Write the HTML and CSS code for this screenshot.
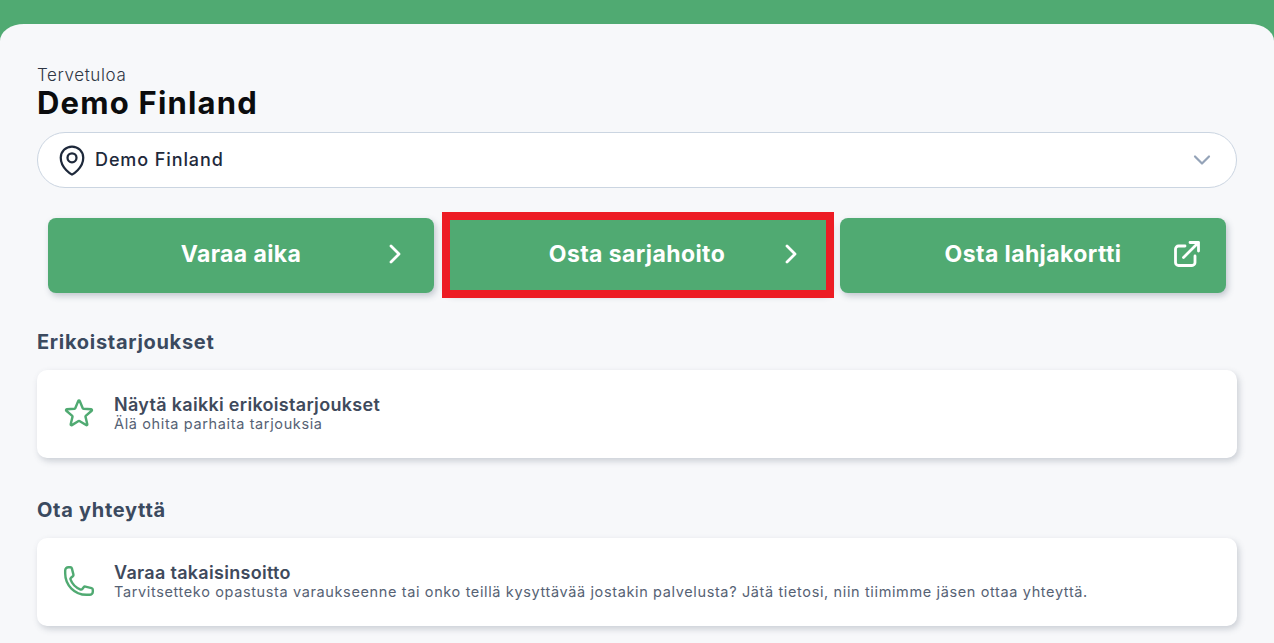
FILE: index.html
```html
<!DOCTYPE html>
<html lang="fi">
<head>
    <meta charset="UTF-8">
    <meta name="viewport" content="width=device-width, initial-scale=1.0">
    <title>Demo Finland</title>
    <link rel="stylesheet" href="styles.css">
</head>
<body>
    <main class="sheet">
        <p class="welcome">Tervetuloa</p>
        <h1 class="client-name">Demo Finland</h1>

        <div class="location-select">
            <svg class="pin-icon" viewBox="0 0 24 24" fill="none" stroke="currentColor" stroke-width="1.5" stroke-linecap="round" stroke-linejoin="round">
                <path d="M15 10.5a3 3 0 11-6 0 3 3 0 016 0z"/>
                <path d="M19.5 10.5c0 7.142-7.5 11.25-7.5 11.25S4.5 17.642 4.5 10.5a7.5 7.5 0 1115 0z"/>
            </svg>
            <span class="location-name">Demo Finland</span>
            <svg class="chevron-down" viewBox="0 0 18 12" fill="none" stroke="currentColor" stroke-width="2.2" stroke-linecap="round" stroke-linejoin="round">
                <path d="M2 2.5 9 9.5 16 2.5"/>
            </svg>
        </div>

        <div class="actions">
            <a class="action-btn">
                <span class="action-label">Varaa aika</span>
                <svg class="chevron-right" viewBox="0 0 12 20" fill="none" stroke="currentColor" stroke-width="2.800" stroke-linecap="round" stroke-linejoin="round">
                    <path d="M2 2 10 10 2 18"/>
                </svg>
            </a>
            <a class="action-btn">
                <span class="action-label">Osta sarjahoito</span>
                <svg class="chevron-right" viewBox="0 0 12 20" fill="none" stroke="currentColor" stroke-width="2.800" stroke-linecap="round" stroke-linejoin="round">
                    <path d="M2 2 10 10 2 18"/>
                </svg>
                <span class="highlight"></span>
            </a>
            <a class="action-btn">
                <span class="action-label">Osta lahjakortti</span>
                <svg class="external-icon" viewBox="0 0 26 26" fill="none" stroke="currentColor" stroke-width="2.800" stroke-linecap="round" stroke-linejoin="round">
                    <path d="M11 5H4.500A3 3 0 0 0 1.500 8V21.500A3 3 0 0 0 4.500 24.500H18A3 3 0 0 0 21 21.500V15"/>
                    <path d="M9.500 16.500 24.500 1.500M16 1.500H24.500V10"/>
                </svg>
            </a>
        </div>

        <h2 class="section-title">Erikoistarjoukset</h2>
        <div class="card">
            <svg class="card-icon" viewBox="0 0 24 24" fill="none" stroke="currentColor" stroke-width="1.7" stroke-linecap="round" stroke-linejoin="round">
                <path d="M11.48 3.499a.562.562 0 011.04 0l2.125 5.111a.563.563 0 00.475.345l5.518.442c.499.04.701.663.321.988l-4.204 3.602a.563.563 0 00-.182.557l1.285 5.385a.562.562 0 01-.84.61l-4.725-2.885a.562.562 0 00-.586 0L6.982 20.54a.562.562 0 01-.84-.61l1.285-5.386a.562.562 0 00-.182-.557l-4.204-3.602a.563.563 0 01.321-.988l5.518-.442a.563.563 0 00.475-.345L11.48 3.5z"/>
            </svg>
            <div class="card-text">
                <div class="card-title">Näytä kaikki erikoistarjoukset</div>
                <div class="card-sub">Älä ohita parhaita tarjouksia</div>
            </div>
        </div>

        <h2 class="section-title contact-title">Ota yhteyttä</h2>
        <div class="card">
            <svg class="card-icon" viewBox="0 0 24 24" fill="none" stroke="currentColor" stroke-width="1.7" stroke-linecap="round" stroke-linejoin="round">
                <path d="M2.25 6.75c0 8.284 6.716 15 15 15h2.25a2.25 2.25 0 002.25-2.25v-1.372c0-.516-.351-.966-.852-1.091l-4.423-1.106c-.44-.11-.902.055-1.173.417l-.97 1.293c-.282.376-.769.542-1.21.38a12.035 12.035 0 01-7.143-7.143c-.162-.441.004-.928.38-1.21l1.293-.97c.363-.271.527-.734.417-1.173L6.963 3.102a1.125 1.125 0 00-1.091-.852H4.5A2.25 2.25 0 002.25 4.5v2.25z"/>
            </svg>
            <div class="card-text">
                <div class="card-title">Varaa takaisinsoitto</div>
                <div class="card-sub">Tarvitsetteko opastusta varaukseenne tai onko teillä kysyttävää jostakin palvelusta? Jätä tietosi, niin tiimimme jäsen ottaa yhteyttä.</div>
            </div>
        </div>
    </main>
</body>
</html>
```

FILE: styles.css
```css
html, body {
    height: 100%;
}
body {
    margin: 0;
    padding-top: 24px;
    box-sizing: border-box;
    background-color: #50aa72;
    font-family: Inter, "Liberation Sans", sans-serif;
    overflow: hidden;
}
.sheet {
    height: 100%;
    box-sizing: border-box;
    padding: 40px 37px 0;
    background-color: #f7f8fa;
    border-radius: 24px 24px 0 0 / 17px 17px 0 0;
}
.welcome {
    margin: 0;
    font-size: 17px;
    line-height: 22px;
    font-weight: 300;
    letter-spacing: 0.6px;
    color: #2f3644;
}
.client-name {
    margin: 0 0 13px;
    font-size: 31px;
    line-height: 33px;
    font-weight: 700;
    letter-spacing: 1.2px;
    color: #0b0c0e;
}
.location-select {
    display: flex;
    align-items: center;
    height: 56px;
    box-sizing: border-box;
    padding: 0 25px 0 16px;
    background-color: #fff;
    border: 1px solid #cbd5e1;
    border-radius: 28px;
    color: #1e293b;
}
.pin-icon {
    width: 36px;
    height: 36px;
    margin-right: 5px;
}
.location-name {
    flex: 1;
    padding-bottom: 2px;
    font-size: 18px;
    font-weight: 500;
    letter-spacing: 0.9px;
}
.chevron-down {
    width: 18px;
    height: 12px;
    color: #94a3b8;
}
.actions {
    display: grid;
    grid-template-columns: repeat(3, 1fr);
    gap: 10px;
    margin: 30px 11px 0;
}
.action-btn {
    position: relative;
    display: grid;
    grid-template-columns: 1fr auto 1fr;
    align-items: center;
    height: 75px;
    box-sizing: border-box;
    padding: 0 26px 3px;
    background-color: #50aa72;
    border-radius: 8px;
    box-shadow: 2px 3px 6px rgba(71, 85, 105, 0.3);
    color: #fff;
}
.action-label {
    grid-column: 2;
    font-size: 23px;
    font-weight: 700;
    letter-spacing: 0.4px;
}
.chevron-right {
    grid-column: 3;
    justify-self: end;
    width: 12px;
    height: 20px;
    margin-right: 7px;
}
.external-icon {
    grid-column: 3;
    justify-self: end;
    width: 26px;
    height: 26px;
}
.highlight {
    position: absolute;
    top: -6px;
    right: -4px;
    bottom: -5px;
    left: -2px;
    border: 8px solid #ed1c24;
}
.section-title {
    margin: 37px 0 15px;
    font-size: 20px;
    line-height: 25px;
    font-weight: 700;
    letter-spacing: 0.7px;
    color: #3b4a5f;
}
.contact-title {
    margin-top: 40.5px;
}
.card {
    display: flex;
    align-items: center;
    height: 87.5px;
    box-sizing: border-box;
    padding: 0 25px;
    background-color: #fff;
    border-radius: 10px;
    box-shadow: 2px 3px 6px rgba(71, 85, 105, 0.25);
}
.card-icon {
    width: 34px;
    height: 34px;
    margin: 0 18px 2px 0;
    color: #50aa72;
}
.card-text {
    padding-top: 2px;
}
.card-title {
    font-size: 18px;
    line-height: 18px;
    font-weight: 600;
    letter-spacing: 0.3px;
    color: #3f4a5c;
}
.card-sub {
    font-size: 14.5px;
    line-height: 19px;
    letter-spacing: 0.63px;
    color: #566274;
}
```
